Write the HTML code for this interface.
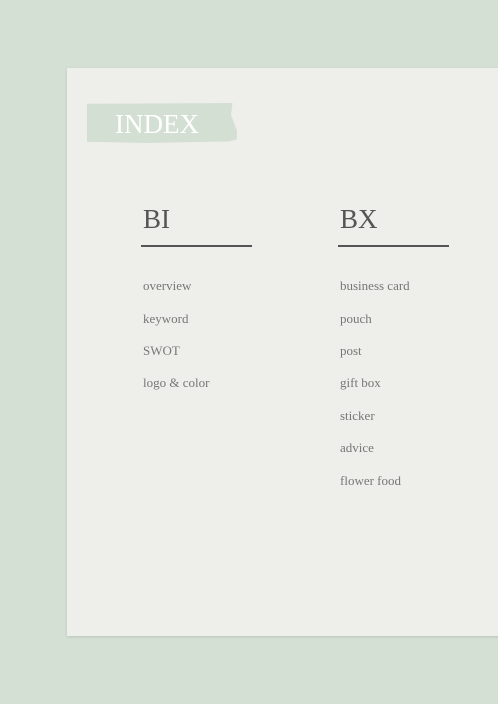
<!DOCTYPE html>
<html><head><style>
body{margin:0;width:498px;height:704px;background:#d5e0d5;position:relative;overflow:hidden;font-family:"Liberation Serif",serif}
.card{position:absolute;left:67px;top:68px;width:440px;height:568px;background:#eeeeea;box-shadow:0 1px 3px rgba(0,0,0,.12)}
.tape{position:absolute;left:87px;top:103px;width:150px;height:40px;background:#d3dfd3;clip-path:polygon(0 2%,97% 0,96% 30%,98% 50%,102% 88%,95% 96%,40% 100%,0 97%)}
.idx{position:absolute;left:115px;top:109px;font-size:27px;color:#fff}
.h{position:absolute;top:204px;font-size:27px;color:#555}
.line{position:absolute;top:245px;width:111px;height:1.5px;background:#555}
.it{position:absolute;font-size:13px;color:#777}
</style></head><body>
<div class="card"></div>
<div class="tape"></div>
<div class="idx">INDEX</div>
<div class="h" style="left:143px">BI</div>
<div class="h" style="left:340px">BX</div>
<div class="line" style="left:141px"></div>
<div class="line" style="left:338px"></div>
<div class="it" style="left:143px;top:278px">overview</div>
<div class="it" style="left:143px;top:311px">keyword</div>
<div class="it" style="left:143px;top:343px">SWOT</div>
<div class="it" style="left:143px;top:375px">logo &amp; color</div>
<div class="it" style="left:340px;top:278px">business card</div>
<div class="it" style="left:340px;top:311px">pouch</div>
<div class="it" style="left:340px;top:343px">post</div>
<div class="it" style="left:340px;top:375px">gift box</div>
<div class="it" style="left:340px;top:408px">sticker</div>
<div class="it" style="left:340px;top:440px">advice</div>
<div class="it" style="left:340px;top:473px">flower food</div>
</body></html>
